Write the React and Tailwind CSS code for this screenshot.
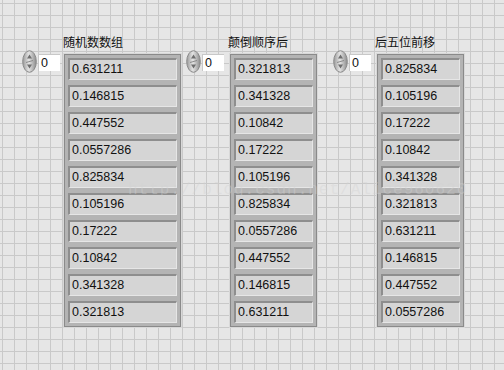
const cols = [
  {
    label: '随机数数组',
    values: ['0.631211', '0.146815', '0.447552', '0.0557286', '0.825834', '0.105196', '0.17222', '0.10842', '0.341328', '0.321813'],
    wide: true,
  },
  {
    label: '颠倒顺序后',
    values: ['0.321813', '0.341328', '0.10842', '0.17222', '0.105196', '0.825834', '0.0557286', '0.447552', '0.146815', '0.631211'],
  },
  {
    label: '后五位前移',
    values: ['0.825834', '0.105196', '0.17222', '0.10842', '0.341328', '0.321813', '0.631211', '0.146815', '0.447552', '0.0557286'],
  },
];

function Spinner() {
  return (
    <svg width="15" height="23" viewBox="0 0 15 23" className="shrink-0">
      <defs>
        <linearGradient id="spin" x1="0" y1="0" x2="1" y2="0">
          <stop offset="0" stopColor="#9a9a9a" />
          <stop offset="0.45" stopColor="#e4e4e4" />
          <stop offset="1" stopColor="#8c8c8c" />
        </linearGradient>
      </defs>
      <ellipse cx="7.5" cy="11.5" rx="6.8" ry="10.8" fill="url(#spin)" stroke="#8a8a8a" strokeWidth="1" />
      <path d="M7.5 4.5 L5 8.5 L10 8.5 Z" fill="#6e6e6e" />
      <path d="M7.5 18.5 L5 14.5 L10 14.5 Z" fill="#6e6e6e" />
      <path d="M4 12.5 L11 10.5" stroke="#7a7a7a" strokeWidth="0.8" />
    </svg>
  );
}

function ArrayControl({ label, values, wide, labelPad, frameGap }) {
  return (
    <div className="flex flex-col">
      <div className="h-[14px] text-[12px] leading-[14px] text-[#111]" style={{ paddingLeft: labelPad }}>
        {label}
      </div>
      <div className="flex items-start">
        <Spinner />
        <div className="mt-[4px] ml-[1px] w-[22px] h-[17px] bg-white border-t border-l border-[#c8c8c8] pl-[2px] text-[12.5px] leading-[16px] text-[#111]">0</div>
        <div
          className="mt-[4px] flex flex-col gap-[5px] p-[3px] bg-[#b4b4b4] border border-[#8a8a8a] shadow-[0_0_0_1px_#d8d8d8]"
          style={{ marginLeft: frameGap }}
        >
          {values.map((v, i) => (
            <div
              key={i}
              className={`${wide ? 'w-[109px]' : 'w-[79px]'} h-[22px] bg-[#d5d5d5] border-t-2 border-l-2 border-[#8e8e8e] border-b border-r border-b-[#e6e6e6] border-r-[#e6e6e6] pl-[2px] text-[12.5px] leading-[19px] text-[#111]`}
            >
              {v}
            </div>
          ))}
        </div>
      </div>
    </div>
  );
}

export default function App() {
  return (
    <div
      className="relative w-[504px] h-[370px] overflow-hidden bg-[#e6e6e6] bg-[linear-gradient(to_right,#c9c9c9_1px,transparent_1px),linear-gradient(to_bottom,#c9c9c9_1px,transparent_1px)] bg-[size:12px_12px] bg-[position:2px_3px]"
      style={{ fontFamily: '"Liberation Sans", "Noto Sans CJK SC", sans-serif' }}
    >
      <div className="flex items-start pt-[36px] pl-[22px]">
        <ArrayControl {...cols[0]} labelPad={41} frameGap={4} />
        <div className="ml-[5px]">
          <ArrayControl {...cols[1]} labelPad={42} frameGap={6} />
        </div>
        <div className="ml-[16px]">
          <ArrayControl {...cols[2]} labelPad={42} frameGap={6} />
        </div>
      </div>
      <div className="absolute left-[128px] top-[178px] text-[16px] tracking-[1px] text-[#d2d2d2]/40 font-['Liberation_Mono',monospace] pointer-events-none">
        http://blog.csdn.net/Alice960620
      </div>
    </div>
  );
}
